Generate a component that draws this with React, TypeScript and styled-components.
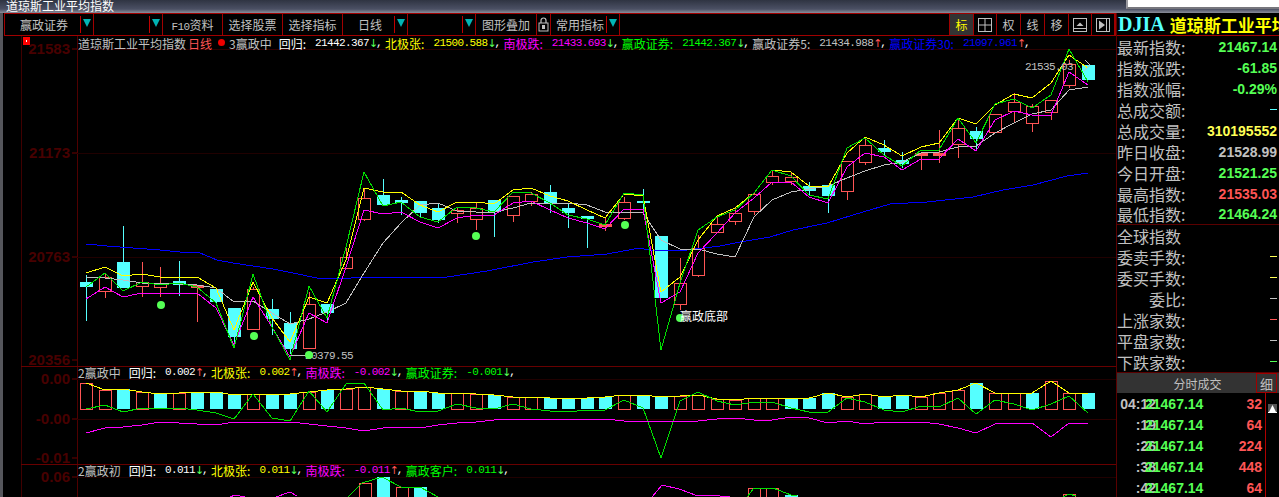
import React from "react";
import styled, { createGlobalStyle } from "styled-components";

const CN = `"Noto Sans CJK SC", "Liberation Sans", sans-serif`;
const NUM = `"Liberation Mono", "Noto Sans CJK SC", monospace`;
const BOLDNUM = `"Liberation Sans", Arial, sans-serif`;

const RED = "#ff5555";
const CYAN = "#55ffff";
const GRID = "#a00000";

const GlobalStyle = createGlobalStyle`
  html, body {
    margin: 0;
    padding: 0;
    background: #000;
  }
  body {
    font-family: ${CN};
    overflow: hidden;
  }
`;

const Screen = styled.div`
  position: relative;
  width: 1279px;
  height: 497px;
  overflow: hidden;
  background: #000;
  display: flex;
  flex-direction: column;
`;

const TitleBar = styled.div`
  height: 13px;
  flex: none;
  padding-left: 6px;
  overflow: hidden;
  color: #fff;
  font-size: 12px;
  line-height: 11px;
  background: linear-gradient(#2f3442, #4b5064 70%, #8a8d99);
`;

const OtherWindow = styled.div`
  position: absolute;
  top: 0;
  right: 0;
  width: 151px;
  height: 7px;
  background: #fff;
  border-left: 2px solid #9a9aa0;
  border-bottom: 2px solid #77777d;
`;

const Body = styled.div`
  flex: 1;
  min-height: 0;
  display: flex;
  border-left: 3px solid #55565c;
`;

const Main = styled.div`
  width: 1113px;
  flex: none;
  display: flex;
  flex-direction: column;
  padding-left: 1px;
  box-sizing: border-box;
`;

const Toolbar = styled.div`
  height: 23px;
  flex: none;
  display: flex;
  border: 1px solid ${GRID};
  box-sizing: border-box;
  color: #c0c0c0;
  font-size: 12px;
`;

const Cell = styled.div<{ $w: number; $active?: boolean }>`
  width: ${(p) => p.$w}px;
  flex: none;
  box-sizing: border-box;
  border-right: 1px solid ${GRID};
  display: flex;
  align-items: center;
  justify-content: center;
  position: relative;
  background: ${(p) => (p.$active ? "#333" : "transparent")};
  color: ${(p) => (p.$active ? "#ffff00" : "#c0c0c0")};
`;

const CellLabel = styled.span<{ $shift?: number }>`
  margin-right: ${(p) => p.$shift || 0}px;
  white-space: nowrap;
`;

const CellNum = styled.span`
  font-family: ${NUM};
  font-size: 11px;
  letter-spacing: -0.6px;
`;

const Drop = styled.span`
  position: absolute;
  right: 1px;
  top: 2px;
  bottom: 2px;
  width: 11px;
  border-left: 1px solid #c00000;
  display: flex;
  align-items: center;
  justify-content: center;

  &::after {
    content: "";
    margin-top: -3px;
    border-left: 4px solid transparent;
    border-right: 4px solid transparent;
    border-top: 8px solid #00b4b4;
  }
`;

const Spacer = styled.div`
  flex: 1;
  border-right: 1px solid ${GRID};
`;

const ChartArea = styled.div`
  position: relative;
  flex: 1;
  min-height: 0;
  overflow: hidden;
`;

const ChartSvg = styled.svg`
  display: block;
`;

const Legend = styled.div<{ $top: number; $left: number }>`
  position: absolute;
  top: ${(p) => p.$top}px;
  left: ${(p) => p.$left}px;
  display: flex;
  align-items: center;
  height: 14px;
  font-size: 12px;
  white-space: nowrap;
  color: #c0c0c0;
`;

const Ind = styled.span<{ $c: string; $ml?: number }>`
  color: ${(p) => p.$c};
  margin-left: ${(p) => p.$ml || 0}px;
  display: inline-flex;
  align-items: center;
`;

const Num = styled.span`
  font-family: ${NUM};
  font-size: 11px;
  letter-spacing: -0.6px;
  margin-left: 9px;
`;

const Arrow = styled.span<{ $up: boolean }>`
  width: 7px;
  text-align: center;
  font-family: "DejaVu Sans", sans-serif;
  font-size: 11px;
  color: ${(p) => (p.$up ? RED : "#55ff55")};
`;

const Comma = styled.span`
  width: 6px;
  color: #fff;
  font-family: ${NUM};
  font-size: 11px;
`;

const Dot = styled.span`
  width: 7px;
  height: 7px;
  border-radius: 50%;
  background: #ee0000;
  margin: 0 4px 2px 6px;
`;

const Sidebar = styled.div`
  flex: 1;
  min-width: 0;
  border-left: 1px solid #5a0000;
  display: flex;
  flex-direction: column;
  overflow: hidden;
  color: #c0c0c0;
`;

const SideHeader = styled.div`
  height: 23px;
  flex: none;
  box-sizing: border-box;
  border-bottom: 1px solid ${GRID};
  display: flex;
  align-items: center;
  gap: 5px;
  padding-left: 1px;
  white-space: nowrap;
  overflow: hidden;
`;

const Code = styled.span`
  font-family: "Liberation Serif", serif;
  font-weight: bold;
  font-size: 20px;
  color: ${CYAN};
`;

const StockName = styled.span`
  font-size: 17px;
  font-weight: bold;
  color: #ffff00;
`;

const InfoRow = styled.div<{ $line?: boolean }>`
  height: 21px;
  flex: none;
  box-sizing: border-box;
  padding: 0 2px 0 0;
  display: flex;
  align-items: center;
  justify-content: space-between;
  border-bottom: ${(p) => (p.$line ? "1px solid #5a0000" : "none")};
  font-size: 16px;
  line-height: 18px;
`;

const InfoLabel = styled.span<{ $indent?: number }>`
  margin-left: ${(p) => p.$indent || 0}px;
  white-space: nowrap;
`;

const InfoValue = styled.span<{ $c: string }>`
  font-family: ${BOLDNUM};
  font-weight: bold;
  font-size: 14px;
  color: ${(p) => p.$c};
  white-space: nowrap;
`;

const Dash = styled.span<{ $c: string }>`
  width: 7px;
  height: 1px;
  background: ${(p) => p.$c};
`;

const TabBar = styled.div`
  height: 21px;
  flex: none;
  display: flex;
  background: #333;
  padding-right: 2px;
  font-size: 12px;
  border-top: 1px solid #5a0000;
  box-sizing: border-box;
`;

const TabTitle = styled.div`
  flex: 1;
  display: flex;
  align-items: center;
  justify-content: center;
  padding-left: 22px;
`;

const TabBtn = styled.div`
  width: 21px;
  box-sizing: border-box;
  border: 1px solid #a00000;
  display: flex;
  align-items: center;
  justify-content: center;
  font-size: 13px;
`;

const TickPane = styled.div`
  flex: 1;
  display: flex;
  min-height: 0;
`;

const TickList = styled.div`
  width: 149px;
  flex: none;
  box-sizing: border-box;
  border-right: 1px solid #b00000;
`;

const TickRow = styled.div`
  height: 21px;
  display: flex;
  align-items: center;
  font-family: ${BOLDNUM};
  font-weight: bold;
  font-size: 14px;
`;

const TickTime = styled.span`
  width: 39px;
  flex: none;
  margin-right: -11px;
  text-align: right;
  color: #c0c0c0;
  white-space: nowrap;
`;

const TickPrice = styled.span`
  color: #55ff55;
`;

const TickQty = styled.span`
  margin-left: auto;
  margin-right: 3px;
  color: ${RED};
`;

const ScrollCol = styled.div`
  flex: 1;
  padding: 1px 0 0 2px;
`;

const chartW = 1112;
const chartH = 461;
const xOf = (i: number) => Math.round(86 + 18.55 * i);

// top, bottom, wick top, wick bottom, r = red hollow / c = cyan filled
const candles: [number, number, number, number, string][] = [
  [282, 287, 275, 321, "c"], [277, 291, 273, 298, "r"], [262, 288, 226, 288, "c"],
  [282, 286, 262, 297, "r"], [283, 287, 267, 297, "r"], [281, 285, 261, 296, "c"],
  [285, 287, 285, 322, "r"], [289, 302, 289, 305, "c"], [308, 337, 308, 345, "c"],
  [289, 329, 287, 329, "r"], [309, 319, 299, 335, "c"], [323, 349, 312, 354, "c"],
  [304, 348, 292, 348, "r"], [304, 313, 304, 323, "c"], [257, 268, 248, 268, "r"],
  [198, 219, 188, 221, "r"], [195, 205, 179, 205, "c"], [200, 203, 197, 215, "c"],
  [201, 213, 201, 217, "c"], [208, 220, 203, 223, "c"], [210, 213, 207, 223, "r"],
  [208, 219, 203, 230, "r"], [200, 212, 200, 237, "c"], [196, 215, 196, 222, "r"],
  [194, 201, 192, 206, "r"], [192, 204, 185, 213, "c"], [208, 213, 203, 228, "c"],
  [216, 219, 216, 248, "c"], [224, 226, 218, 231, "r"], [202, 218, 197, 220, "r"],
  [201, 203, 189, 213, "c"], [236, 298, 236, 298, "c"], [283, 304, 258, 310, "r"],
  [248, 275, 235, 277, "r"], [224, 232, 215, 233, "r"], [213, 221, 208, 225, "r"],
  [194, 211, 192, 215, "r"], [176, 182, 170, 185, "r"], [177, 181, 173, 185, "r"],
  [186, 191, 182, 195, "c"], [185, 196, 185, 213, "c"], [161, 191, 161, 200, "r"],
  [145, 162, 138, 165, "r"], [148, 152, 140, 156, "c"], [160, 164, 152, 168, "c"],
  [153, 155, 152, 170, "r"], [153, 155, 130, 163, "r"], [128, 144, 120, 158, "r"],
  [131, 139, 127, 151, "c"], [114, 132, 114, 133, "r"], [102, 111, 93, 123, "r"],
  [106, 123, 104, 132, "r"], [100, 112, 100, 120, "r"], [64, 85, 60, 88, "r"],
  [65, 80, 65, 80, "c"],
];

const yellow = [273, 267, 276, 274, 277, 277, 277, 288, 330, 282, 318, 342, 297, 303, 260, 188, 192, 192, 205, 212, 202, 202, 204, 190, 188, 196, 201, 210, 218, 194, 196, 292, 277, 240, 216, 208, 193, 170, 172, 186, 187, 153, 137, 145, 156, 147, 143, 118, 124, 105, 94, 98, 83, 55, 68];
const green = [287, 273, 291, 282, 285, 283, 287, 303, 348, 274, 327, 360, 286, 318, 247, 172, 206, 202, 217, 222, 207, 208, 212, 192, 193, 203, 215, 219, 225, 193, 195, 350, 283, 230, 217, 210, 193, 170, 176, 195, 199, 148, 138, 155, 166, 150, 150, 118, 143, 104, 99, 108, 95, 49, 82];
const magenta = [299, 287, 297, 293, 293, 293, 293, 308, 345, 297, 327, 357, 313, 323, 267, 210, 214, 212, 222, 228, 218, 215, 215, 203, 201, 210, 218, 223, 229, 209, 209, 303, 292, 253, 233, 213, 198, 182, 182, 197, 203, 167, 153, 157, 170, 159, 159, 139, 151, 120, 111, 115, 115, 72, 85];
const white = [277, 278, 280, 283, 283, 284, 285, 288, 302, 301, 313, 324, 319, 312, 303, 273, 243, 223, 205, 203, 211, 212, 212, 208, 203, 203, 203, 205, 212, 212, 213, 240, 249, 249, 254, 257, 217, 200, 192, 189, 186, 178, 171, 165, 162, 153, 152, 147, 146, 133, 123, 114, 110, 90, 87];
const bluePts: [number, number][] = [
  [86, 244], [107, 246], [133, 248], [160, 250], [180, 252], [200, 253], [217, 260], [233, 263], [253, 266], [273, 269], [293, 273], [317, 278], [340, 279], [363, 277], [447, 277], [487, 271], [533, 262], [567, 257], [607, 254], [640, 248], [653, 251], [687, 250], [720, 246], [740, 242], [770, 237], [793, 230], [827, 223], [853, 215], [890, 204], [927, 202], [973, 197], [1003, 190], [1033, 185], [1067, 176], [1088, 173],
];

// first sub-panel, columns at the same x as the candles
const macdTop = [383, 390, 389, 392, 394, 393, 392, 392, 395, 394, 395, 394, 392, 390, 389, 387, 389, 391, 391, 393, 393, 394, 395, 397, 397, 398, 398, 398, 397, 395, 395, 397, 396, 395, 399, 400, 398, 398, 399, 398, 393, 397, 394, 397, 395, 397, 393, 390, 383, 393, 393, 393, 381, 393, 393];
const macdKind = "rrcrcrcccrccrcrrcrccrrcrrccccrccrrrrrrcccrrccrrrcrrcrrc";
const macdGreen = [409, 405, 412, 408, 409, 408, 410, 413, 419, 394, 418, 421, 391, 412, 384, 383, 410, 408, 412, 411, 404, 408, 409, 404, 409, 411, 412, 410, 410, 400, 408, 458, 401, 392, 401, 405, 402, 402, 408, 412, 412, 398, 402, 410, 412, 406, 407, 398, 414, 400, 404, 410, 404, 396, 413];
const macdMagenta = [433, 428, 427, 425, 422, 423, 424, 425, 422, 422, 422, 422, 424, 426, 428, 431, 428, 427, 428, 425, 423, 422, 420, 419, 420, 419, 419, 419, 419, 421, 421, 421, 421, 421, 419, 418, 420, 420, 417, 418, 423, 421, 424, 422, 422, 422, 424, 428, 433, 424, 423, 423, 437, 423, 424];

const toPoints = (ys: number[]) => ys.map((y, i) => `${xOf(i)},${y}`).join(" ");

const AxisLabel: React.FC<{ y: number; children: string }> = ({ y, children }) => (
  <>
    <text x={70} y={y + 5} textAnchor="end" fill="#480000" fontFamily={BOLDNUM} fontWeight="bold" fontSize={15}>
      {children}
    </text>
    <line x1={72} x2={77} y1={y} y2={y} stroke="#6a0000" />
  </>
);

const Chart: React.FC = () => (
  <ChartSvg width={chartW} height={chartH} viewBox={`4 36 ${chartW} ${chartH}`}>
    {/* frame and grid */}
    <g shapeRendering="crispEdges">
      <line x1={21.5} x2={21.5} y1={36} y2={497} stroke="#400000" />
      <line x1={77.5} x2={77.5} y1={36} y2={497} stroke="#500000" />
      <line x1={77} x2={1116} y1={49.5} y2={49.5} stroke="#2c0000" />
      <line x1={77} x2={1116} y1={153.5} y2={153.5} stroke="#200000" />
      <line x1={77} x2={1116} y1={257.5} y2={257.5} stroke="#200000" />
      <line x1={77} x2={1116} y1={379.5} y2={379.5} stroke="#200000" />
      <line x1={77} x2={1116} y1={419.5} y2={419.5} stroke="#2c0000" />
      <line x1={77} x2={1116} y1={477.5} y2={477.5} stroke="#200000" />
      <line x1={21} x2={1116} y1={366.5} y2={366.5} stroke="#680000" />
      <line x1={21} x2={1116} y1={464.5} y2={464.5} stroke="#680000" />
    </g>
    <AxisLabel y={49}>21583</AxisLabel>
    <AxisLabel y={153}>21173</AxisLabel>
    <AxisLabel y={257}>20763</AxisLabel>
    <AxisLabel y={360}>20356</AxisLabel>
    <AxisLabel y={379}>0.00</AxisLabel>
    <AxisLabel y={419}>-0.00</AxisLabel>
    <AxisLabel y={458}>-0.01</AxisLabel>
    <AxisLabel y={477}>0.06</AxisLabel>

    {/* marker in the corner */}
    <rect x={24.5} y={38.5} width={4} height={5} fill="#fff" stroke="#ff0000" strokeWidth={3} shapeRendering="crispEdges" />

    {/* candles */}
    <g shapeRendering="crispEdges">
      {candles.map(([t, b, wt, wb, kind], i) => {
        const x = xOf(i);
        const c = kind === "r" ? RED : CYAN;
        return (
          <g key={i}>
            <line x1={x + 0.5} x2={x + 0.5} y1={wt} y2={wb} stroke={c} />
            {kind === "r" ? (
              <rect x={x - 5.5} y={t + 0.5} width={12} height={b - t} fill={b - t < 3 ? RED : "#000"} stroke={c} />
            ) : (
              <rect x={x - 6} y={t} width={13} height={b - t} fill={c} />
            )}
          </g>
        );
      })}
    </g>

    {/* moving averages */}
    <g fill="none" strokeWidth={1} shapeRendering="crispEdges">
      <polyline points={bluePts.map((p) => p.join(",")).join(" ")} stroke="#0000ff" />
      <polyline points={toPoints(white)} stroke="#c0c0c0" />
      <polyline points={toPoints(magenta)} stroke="#ff00ff" />
      <polyline points={toPoints(yellow)} stroke="#ffff00" />
      <polyline points={toPoints(green)} stroke="#00e000" />
    </g>

    {/* extreme labels, the dot sits on the first digit */}
    <g fontFamily={NUM} fontSize={11} fill="#c0c0c0" letterSpacing={-0.6}>
      <line x1={291} x2={309} y1={355.5} y2={355.5} stroke="#c0c0c0" shapeRendering="crispEdges" />
      <text x={305} y={359}>20379.55</text>
      <text x={1025} y={70}>21535.03</text>
      <polyline points="1085,60 1090,65 1084,71" fill="none" stroke="#c0c0c0" />
    </g>

    {/* signal dots */}
    {[[161, 305], [254, 336], [309, 355], [476, 236], [625, 225], [680, 318]].map(([cx, cy]) => (
      <circle key={cx} cx={cx} cy={cy} r={4} fill="#55ff55" />
    ))}
    <text x={680} y={321} fontFamily={CN} fontSize={12} fill="#fff">赢政底部</text>

    {/* first sub-panel */}
    <g shapeRendering="crispEdges">
      {macdTop.map((t, i) => {
        const x = xOf(i);
        return macdKind[i] === "r" ? (
          <rect key={i} x={x - 5.5} y={t + 0.5} width={12} height={409 - t} fill="none" stroke={RED} />
        ) : (
          <rect key={i} x={x - 6} y={t} width={13} height={409 - t} fill={CYAN} />
        );
      })}
    </g>
    <g fill="none" shapeRendering="crispEdges">
      <polyline points={toPoints(macdTop)} stroke="#ffff00" />
      <polyline points={toPoints(macdGreen)} stroke="#00e000" />
      <polyline points={toPoints(macdMagenta)} stroke="#ff00ff" />
    </g>

    {/* second sub-panel, cut off by the window */}
    <g shapeRendering="crispEdges">
      <rect x={359} y={483.5} width={12} height={20} fill="none" stroke={RED} />
      <rect x={377} y={477} width={13} height={30} fill={CYAN} />
      <rect x={396} y={487.5} width={12} height={20} fill="none" stroke={RED} />
      <rect x={414} y={487} width={13} height={20} fill={CYAN} />
      <rect x={748} y={488.5} width={12} height={20} fill="none" stroke={RED} />
      <rect x={766} y={488.5} width={12} height={20} fill="none" stroke={RED} />
      <rect x={785} y={495} width={13} height={10} fill={CYAN} />
      <rect x={1063} y={494.5} width={12} height={10} fill="none" stroke={RED} />
    </g>
    <g fill="none" shapeRendering="crispEdges">
      <polyline points="348,497 362,483 382,477 401,487 420,487 438,497" stroke="#00e000" />
      <polyline points="747,497 754,488 773,488 791,495 797,496" stroke="#00e000" />
      <polyline points="1063,497 1069,494 1076,496" stroke="#00e000" />
      <polyline points="230,497 235,495 245,497" stroke="#ff00ff" />
      <polyline points="276,497 290,492 297,496" stroke="#ff00ff" />
      <polyline points="652,497 662,485 679,489 698,496 710,495 730,497" stroke="#ff00ff" />
    </g>
  </ChartSvg>
);

type Reading = { name: string; value: string; color: string; up: boolean };

const LegendRow: React.FC<{ items: Reading[]; gap: number }> = ({ items, gap }) => (
  <>
    {items.map((r, i) => (
      <Ind key={r.name} $c={r.color} $ml={i === 0 ? 0 : gap}>
        {r.name}:
        <Num>{r.value}</Num>
        <Arrow $up={r.up}>{r.up ? "↑" : "↓"}</Arrow>
        <Comma>,</Comma>
      </Ind>
    ))}
  </>
);

const mainReadings: Reading[] = [
  { name: "回归", value: "21442.367", color: "#fff", up: false },
  { name: "北极张", value: "21500.588", color: "#ffff00", up: false },
  { name: "南极跌", value: "21433.693", color: "#ff00ff", up: false },
  { name: "赢政证券", value: "21442.367", color: "#00ff00", up: false },
  { name: "赢政证券5", value: "21434.988", color: "#c0c0c0", up: true },
  { name: "赢政证券30", value: "21097.961", color: "#0000ff", up: true },
];

const midReadings: Reading[] = [
  { name: "回归", value: "0.002", color: "#fff", up: true },
  { name: "北极张", value: "0.002", color: "#ffff00", up: true },
  { name: "南极跌", value: "-0.002", color: "#ff00ff", up: false },
  { name: "赢政证券", value: "-0.001", color: "#00ff00", up: false },
];

const lowReadings: Reading[] = [
  { name: "回归", value: "0.011", color: "#fff", up: false },
  { name: "北极张", value: "0.011", color: "#ffff00", up: false },
  { name: "南极跌", value: "-0.011", color: "#ff00ff", up: true },
  { name: "赢政客户", value: "0.011", color: "#00ff00", up: false },
];

const GREEN_V = "#55ff55";

const info: { label: string; value?: string; color: string; indent?: number; line?: boolean }[] = [
  { label: "最新指数:", value: "21467.14", color: GREEN_V },
  { label: "指数涨跌:", value: "-61.85", color: GREEN_V },
  { label: "指数涨幅:", value: "-0.29%", color: GREEN_V },
  { label: "总成交额:", color: CYAN },
  { label: "总成交量:", value: "310195552", color: "#ffff55" },
  { label: "昨日收盘:", value: "21528.99", color: "#c0c0c0" },
  { label: "今日开盘:", value: "21521.25", color: GREEN_V },
  { label: "最高指数:", value: "21535.03", color: RED },
  { label: "最低指数:", value: "21464.24", color: GREEN_V, line: true },
  { label: "全球指数", color: "transparent" },
  { label: "委卖手数:", color: "#ffff55" },
  { label: "委买手数:", color: "#ffff55" },
  { label: "委比:", color: "#c0c0c0", indent: 32 },
  { label: "上涨家数:", color: RED },
  { label: "平盘家数:", color: "#c0c0c0" },
  { label: "下跌家数:", color: GREEN_V },
];

const ticks = [
  ["04:12", "32"],
  [":19", "64"],
  [":26", "224"],
  [":38", "448"],
  [":42", "64"],
];

const App: React.FC = () => (
  <Screen>
    <GlobalStyle />
    <TitleBar>道琼斯工业平均指数</TitleBar>
    <OtherWindow />
    <Body>
      <Main>
        <Toolbar>
          <Cell $w={89}>
            <CellLabel $shift={10}>赢政证券</CellLabel>
            <Drop />
          </Cell>
          <Cell $w={69}>
            <Drop />
          </Cell>
          <Cell $w={60}>
            <CellLabel>
              <CellNum>F10</CellNum>资料
            </CellLabel>
          </Cell>
          <Cell $w={60}>选择股票</Cell>
          <Cell $w={60}>选择指标</Cell>
          <Cell $w={65}>
            <CellLabel $shift={10}>日线</CellLabel>
            <Drop />
          </Cell>
          <Cell $w={68}>
            <Drop />
          </Cell>
          <Cell $w={61}>图形叠加</Cell>
          <Cell $w={14}>
            <svg width={11} height={15} viewBox="0 0 11 15">
              <path d="M3 6V3.5a2.5 2.5 0 0 1 5 0V6" fill="none" stroke="#c0c0c0" strokeWidth={1.2} />
              <rect x={1} y={6} width={9} height={8} fill="none" stroke="#c0c0c0" />
              <rect x={4} y={8} width={3} height={4} fill="#c0c0c0" />
            </svg>
          </Cell>
          <Cell $w={69}>
            <CellLabel $shift={10}>常用指标</CellLabel>
            <Drop />
          </Cell>
          <Spacer />
          <Cell $w={24} $active>标</Cell>
          <Cell $w={23}>
            <svg width={14} height={14} viewBox="0 0 14 14">
              <rect x={0.5} y={0.5} width={13} height={13} fill="none" stroke="#c0c0c0" />
              <path d="M7 1V13M1 7H13" stroke="#c0c0c0" />
            </svg>
          </Cell>
          <Cell $w={24}>权</Cell>
          <Cell $w={24}>线</Cell>
          <Cell $w={24}>移</Cell>
          <Cell $w={23}>
            <svg width={14} height={14} viewBox="0 0 14 14">
              <rect x={0.5} y={0.5} width={13} height={13} fill="none" stroke="#c0c0c0" />
              <path d="M1 10.5H13" stroke="#c0c0c0" />
              <path d="M3.5 8L7 4.5L10.5 8Z" fill="#c0c0c0" />
            </svg>
          </Cell>
          <Cell $w={23}>
            <svg width={14} height={14} viewBox="0 0 14 14">
              <rect x={0.5} y={0.5} width={13} height={13} fill="none" stroke="#c0c0c0" />
              <path d="M10.5 1V13" stroke="#c0c0c0" />
              <path d="M3 2.5L9 7L3 11.5Z" fill="#c0c0c0" />
            </svg>
          </Cell>
        </Toolbar>
        <ChartArea>
          <Chart />
          <Legend $top={0} $left={74}>
            道琼斯工业平均指数
            <Ind $c="#ff5555" $ml={2}>日线</Ind>
            <Dot />
            3赢政中
            <Ind $c="#c0c0c0" $ml={7}>
              <LegendRow items={mainReadings} gap={3} />
            </Ind>
          </Legend>
          <Legend $top={329} $left={74}>
            2赢政中
            <Ind $c="#c0c0c0" $ml={8}>
              <LegendRow items={midReadings} gap={3} />
            </Ind>
          </Legend>
          <Legend $top={427} $left={74}>
            2赢政初
            <Ind $c="#c0c0c0" $ml={8}>
              <LegendRow items={lowReadings} gap={3} />
            </Ind>
          </Legend>
        </ChartArea>
      </Main>
      <Sidebar>
        <SideHeader>
          <Code>DJIA</Code>
          <StockName>道琼斯工业平均指数</StockName>
        </SideHeader>
        {info.map((row) => (
          <InfoRow key={row.label} $line={row.line}>
            <InfoLabel $indent={row.indent}>{row.label}</InfoLabel>
            {row.value ? <InfoValue $c={row.color}>{row.value}</InfoValue> : <Dash $c={row.color} />}
          </InfoRow>
        ))}
        <TabBar>
          <TabTitle>分时成交</TabTitle>
          <TabBtn>细</TabBtn>
        </TabBar>
        <TickPane>
          <TickList>
            {ticks.map(([time, qty]) => (
              <TickRow key={time}>
                <TickTime>{time}</TickTime>
                <TickPrice>21467.14</TickPrice>
                <TickQty>{qty}</TickQty>
              </TickRow>
            ))}
          </TickList>
          <ScrollCol>
            <svg width={9} height={9} viewBox="0 0 9 9">
              <rect width={9} height={9} fill="#555" />
              <path d="M0 8.5H9" stroke="#fff" />
              <path d="M4.5 1L8 8H1Z" fill="#fff" />
            </svg>
          </ScrollCol>
        </TickPane>
      </Sidebar>
    </Body>
  </Screen>
);

export default App;
